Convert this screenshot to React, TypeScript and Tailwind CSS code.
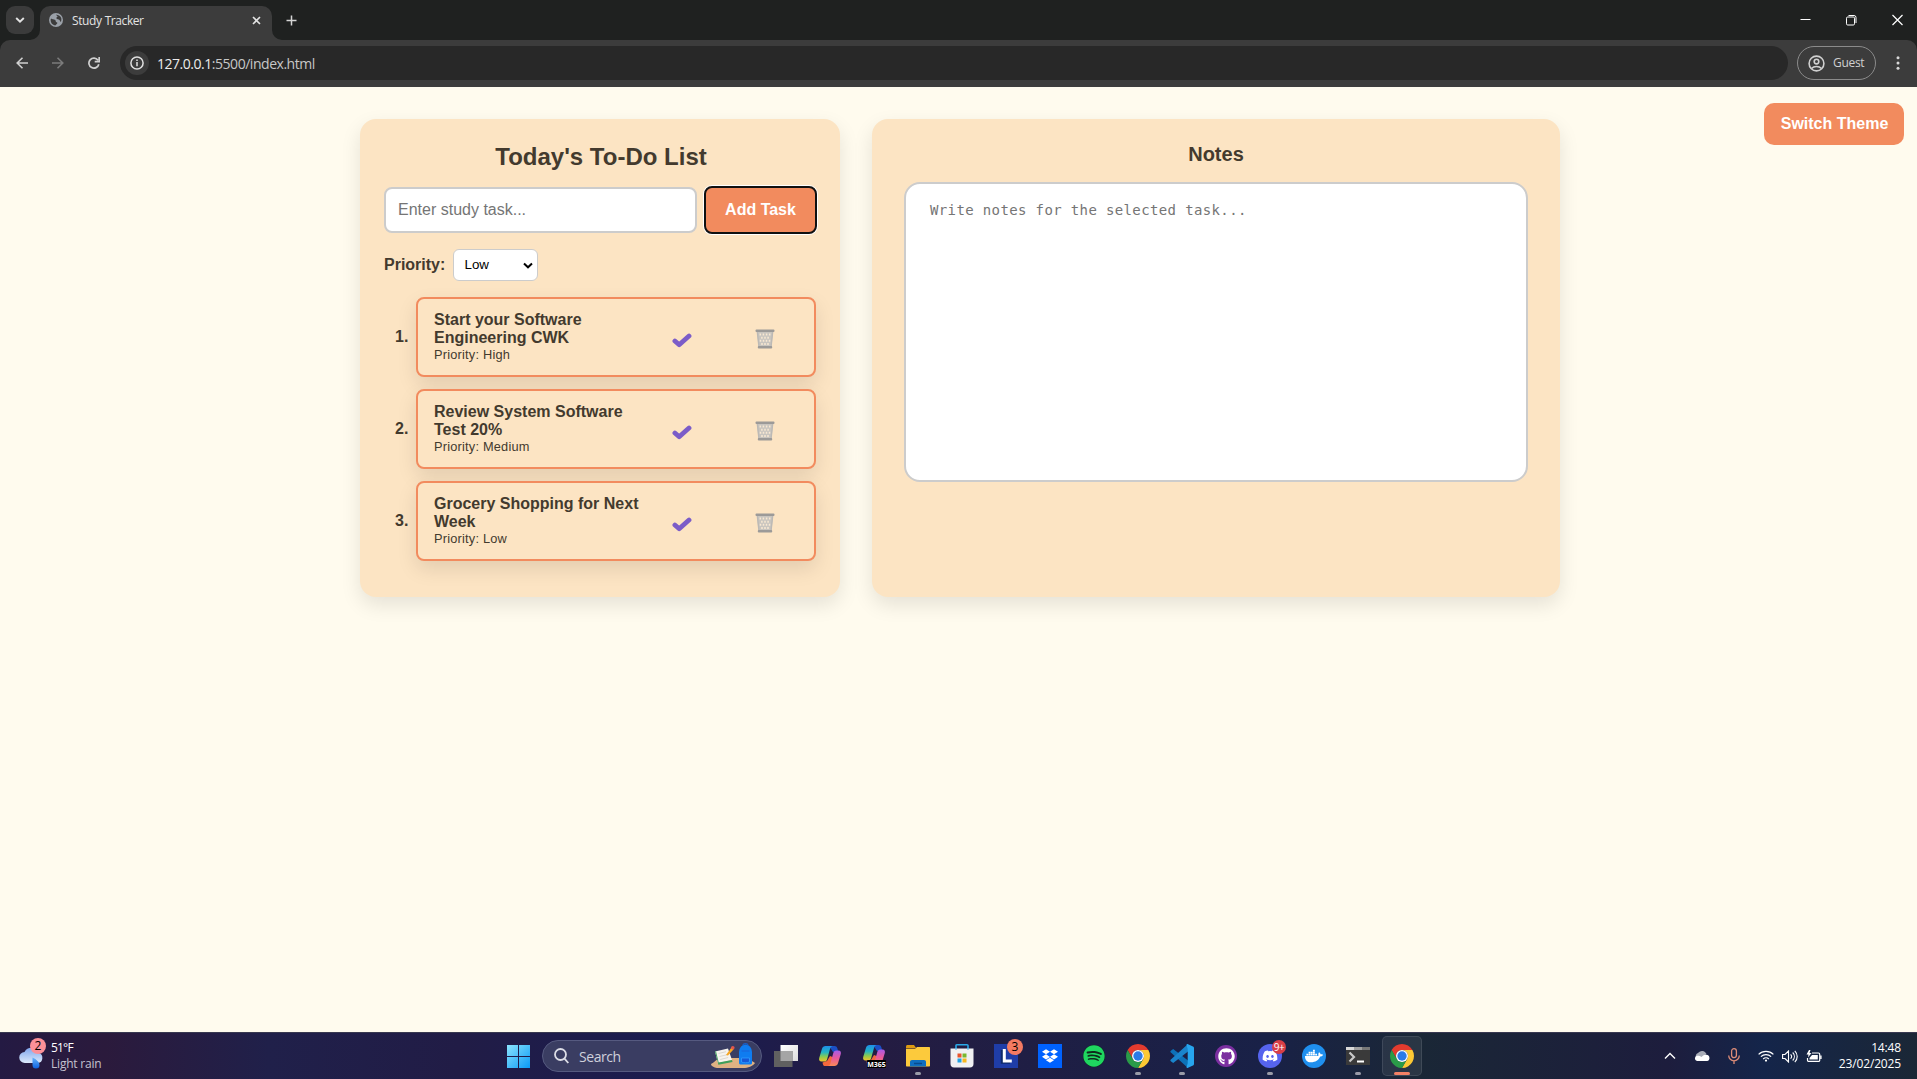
import React from "react";
import { FaDiscord, FaDocker, FaDropbox, FaGithub, FaSpotify } from "react-icons/fa6";

const UI = "font-['Segoe_UI','Open_Sans',sans-serif]";

function ChromeIcon() {
  return (
    <svg width="24" height="24" viewBox="0 0 24 24">
      <path d="M1.61 6A12 12 0 0 1 22.39 6H12A6 6 0 0 0 6.8 15Z" fill="#e33b2e" />
      <path d="M22.39 6A12 12 0 0 1 12 24L17.2 15A6 6 0 0 0 12 6Z" fill="#fcc934" />
      <path d="M12 24A12 12 0 0 1 1.61 6L6.8 15A6 6 0 0 0 17.2 15Z" fill="#2a9b48" />
      <circle cx="12" cy="12" r="6" fill="#fff" />
      <circle cx="12" cy="12" r="4.7" fill="#2a7be8" />
    </svg>
  );
}

function CopilotIcon({ id }: { id: string }) {
  return (
    <svg width="24" height="22" viewBox="0 0 24 22">
      <defs>
        <linearGradient id={id + "a"} x1="0" y1="0" x2="0" y2="1">
          <stop offset="0" stopColor="#1f8fe8" />
          <stop offset=".4" stopColor="#22b4c4" />
          <stop offset=".7" stopColor="#8fcb4c" />
          <stop offset="1" stopColor="#f5c22b" />
        </linearGradient>
        <linearGradient id={id + "b"} x1="0" y1="0" x2="0" y2="1">
          <stop offset="0" stopColor="#a65be8" />
          <stop offset=".5" stopColor="#e8589c" />
          <stop offset="1" stopColor="#fb8a56" />
        </linearGradient>
      </defs>
      <path d="M11 1h5.5c1.6 0 2.3.8 2.8 2.3L20.500 7H15l-2-3z" fill="#1b4fc4" />
      <path d="M6.500 21h6c1.600 0 2.500-.8 3-2.500L17 13l-5-2-3 5-4.500 1.500C5 19.500 5.300 21 6.500 21z" fill="#f4683c" />
      <path d="M7.500 1h7.200c-1.700.3-2.300 1.500-2.700 3L9.200 14c-.5 1.800-1.300 2.600-3 2.600H3.500C1.500 16.600.7 15 1.200 13L4 3.700C4.600 1.900 5.700 1 7.500 1z" fill={`url(#${id}a)`} />
      <path d="M16.500 21H9.800c1.700-.3 2.300-1.500 2.700-3l2.800-10c.5-1.800 1.300-2.600 3-2.600h2.200c2 0 2.800 1.600 2.300 3.600L20 18.300c-.6 1.800-1.700 2.700-3.500 2.700z" fill={`url(#${id}b)`} />
    </svg>
  );
}

function Cell({ children, dot, active }: { children: React.ReactNode; dot?: boolean; active?: boolean }) {
  return (
    <div className="relative flex h-[46px] w-[44px] shrink-0 items-center justify-center">
      {active && <div className="absolute inset-x-[2px] top-[3px] h-[40px] rounded-[5px] border border-white/10 bg-white/[0.07]" />}
      <div className="relative">{children}</div>
      {dot && <div className="absolute bottom-[4px] left-[19px] h-[3px] w-[6px] rounded-full bg-[#9a9ba8]" />}
      {active && <div className="absolute bottom-[4px] left-[14px] h-[3px] w-[16px] rounded-full bg-[#f38166]" />}
    </div>
  );
}

function BrowserChrome() {
  return (
    <header className={"h-[87px] bg-[#1f2120] " + UI}>
      <div className="flex h-[40px] items-start pl-[6px] pt-[6px]">
        <div className="flex h-[28px] w-[28px] items-center justify-center rounded-[9px] bg-[#3b3b3b]">
          <svg width="10" height="8" viewBox="0 0 10 8" fill="none" stroke="#e3e3e3" strokeWidth="1.900"><path d="M1.200 2 5 5.700 8.800 2" /></svg>
        </div>
        <div className="relative ml-[6px] flex h-[34px] w-[232px] items-center rounded-t-[10px] bg-[#3c3c3c] pb-[6px]">
          <svg className="absolute -left-[10px] bottom-0" width="10" height="10"><path d="M10 0V10H0A10 10 0 0 0 10 0" fill="#3c3c3c" /></svg>
          <svg className="absolute -right-[10px] bottom-0" width="10" height="10"><path d="M0 0V10H10A10 10 0 0 1 0 0" fill="#3c3c3c" /></svg>
          <svg className="ml-[9px]" width="14" height="14" viewBox="0 0 14 14">
            <circle cx="7" cy="7" r="7" fill="#9aa0a8" />
            <path d="M2 5.500c1 .8 3 .4 4.200 1.500 1 1 .2 2 1.400 2.300.8.200 1 .9.400 1.500L6.200 12.500C3.500 12 1.600 10 1.600 7zM7 1.700c1.500-.3 4 .7 5 2.800.6 1.500.5 3-.1 4.400C11 8.500 11 7 9.800 6.500 8.500 6.200 7.300 6 7.300 5c0-.8 1.200-.8 1.300-1.700C8.500 2.600 7 2.600 7 1.700z" fill="#3c3c3c" />
          </svg>
          <span className="ml-[9px] mt-[2px] text-[12px] leading-[16px] tracking-[-0.420px] text-[#e3e3e3] [word-spacing:0.5px]">Study Tracker</span>
          <svg className="ml-auto mr-[11px]" width="9" height="9" viewBox="0 0 9 9" stroke="#e3e3e3" strokeWidth="1.600"><path d="M1 1l7 7M8 1l-7 7" /></svg>
        </div>
        <svg className="ml-[14px] mt-[9px]" width="11" height="11" viewBox="0 0 11 11" stroke="#d5d5d5" strokeWidth="1.500"><path d="M5.500.5v10M.5 5.500h10" /></svg>
        <div className="ml-auto flex items-center pr-[14px] pt-[8px] text-white">
          <svg width="11" height="12" viewBox="0 0 11 12" stroke="white"><path d="M.5 5.500h10" /></svg>
          <svg className="ml-[35px]" width="11" height="12" viewBox="0 0 11 12" stroke="white" fill="none"><rect x=".5" y="3" width="8" height="8" rx="1.200" /><path d="M2.500 1.500H8a2 2 0 0 1 2 2V9" /></svg>
          <svg className="ml-[35px]" width="11" height="12" viewBox="0 0 11 12" stroke="white" strokeWidth="1.200"><path d="M.5 1l10 10M10.500 1l-10 10" /></svg>
        </div>
      </div>
      <div className="flex h-[47px] items-center rounded-t-[10px] bg-[#3c3c3c] pb-[1px] pl-[16px]">
        <svg width="12" height="12" viewBox="0 0 12 12" fill="none" stroke="#d0d0d0" strokeWidth="1.600"><path d="M12 6H1.200M6.500.8 1.200 6l5.300 5.200" /></svg>
        <svg className="ml-[24px]" width="12" height="12" viewBox="0 0 12 12" fill="none" stroke="#7b7b7b" strokeWidth="1.600"><path d="M0 6h10.800M5.500.8 10.800 6l-5.300 5.200" /></svg>
        <svg className="ml-[24px]" width="12" height="12" viewBox="0 0 12 12" fill="none" stroke="#d0d0d0" strokeWidth="1.700"><path d="M10.800 7.200A5 5 0 1 1 10 3.200M11.200 0v4.600H6.700" /></svg>
        <div className="ml-[20px] flex h-[34px] w-[1668px] items-center rounded-full bg-[#282828] pl-[5px]">
          <div className="flex h-[24px] w-[24px] items-center justify-center rounded-full bg-[#3c3c3c]">
            <svg width="14" height="14" viewBox="0 0 14 14" fill="none" stroke="#e0e0e0" strokeWidth="1.500"><circle cx="7" cy="7" r="6.100" /><path d="M7 6v4.300M7 3.500v1.500" /></svg>
          </div>
          <span className="ml-[8px] text-[14px] tracking-[-0.470px] text-[#c7c7c7]"><span className="text-[#ececec]">127.0.0.1</span>:5500/index.html</span>
        </div>
        <div className="ml-[9px] flex h-[34px] w-[79px] items-center rounded-full border border-[#8b8b8b] pl-[10px]">
          <svg width="17" height="17" viewBox="0 0 17 17" fill="none" stroke="#d0d0d0" strokeWidth="1.600"><circle cx="8.500" cy="8.500" r="7.400" /><circle cx="8.500" cy="6.600" r="2.300" /><path d="M3.500 13.500c2.500-2.700 7.500-2.700 10 0" /></svg>
          <span className="ml-[8px] text-[12px] tracking-[-0.3px] text-[#d0d0d0]">Guest</span>
        </div>
        <svg className="ml-[20px]" width="4" height="14" viewBox="0 0 4 14" fill="#d8d8d8"><circle cx="2" cy="1.700" r="1.500" /><circle cx="2" cy="7" r="1.500" /><circle cx="2" cy="12.300" r="1.500" /></svg>
      </div>
    </header>
  );
}

function TrashIcon() {
  return (
    <svg width="20" height="20" viewBox="0 0 20 20" fill="none">
      <path d="M1.800 2h16.400l-1.800 16H3.600z" fill="#c9c5bf" />
      <path d="M5.300 4.500v2M8.400 4.500v2M11.600 4.500v2M14.700 4.500v2M6.900 7.700v2M10 7.700v2M13.100 7.700v2M5.500 10.800v2M8.500 10.800v2M11.500 10.800v2M14.500 10.800v2M7 14v2M10 14v2M13 14v2" stroke="#f8e8d2" strokeWidth="1.500" />
      <path d="M2.300 2.500 4 18M17.700 2.500 16 18" stroke="#bcb9b5" strokeWidth="1.400" />
      <rect x=".5" y=".5" width="19" height="2.500" rx="1" fill="#9c9a98" />
      <rect x="2.800" y="17" width="14.400" height="2.500" rx="1" fill="#9c9a98" />
    </svg>
  );
}

const tasks = [
  { lines: ["Start your Software", "Engineering CWK"], priority: "High" },
  { lines: ["Review System Software", "Test 20%"], priority: "Medium" },
  { lines: ["Grocery Shopping for Next", "Week"], priority: "Low" },
];

function TaskRow({ n, lines, priority }: { n: number; lines: string[]; priority: string }) {
  return (
    <li className="flex h-[80px] items-center">
      <span className="w-[32px] pl-[11px] text-[16px] font-bold leading-[18px]">{n}.</span>
      <div className="flex h-[80px] w-[400px] rounded-[8px] border-2 border-[#f28b5e] bg-[#fce4c3] pl-[16px] pt-[12px] shadow-[0_8px_20px_rgba(0,0,0,0.1)]">
        <div className="w-[238px]">
          <div className="whitespace-nowrap text-[16px] font-bold leading-[18px]">
            {lines.map((l) => <div key={l}>{l}</div>)}
          </div>
          <div className="text-[12.800px] leading-[15px] tracking-[0.2px]">Priority: {priority}</div>
        </div>
        <svg className="mt-[22px]" width="20" height="15" viewBox="0 0 20 15" fill="none" stroke="#7b5cc8" strokeWidth="4.800" strokeLinecap="round" strokeLinejoin="round"><path d="M2.900 8 7.200 11.800 17 3" /></svg>
        <div className="ml-[63px] mt-[17.500px]"><TrashIcon /></div>
      </div>
    </li>
  );
}

function StudyTracker() {
  return (
    <main className="relative flex h-[945px] items-start gap-[32px] overflow-hidden bg-[#fffbee] pl-[360px] pt-[32px] font-['Liberation_Sans',Arial,sans-serif] text-[#433a2e]">
      <section className="h-[478px] w-[480px] rounded-[16px] bg-[#fce4c3] px-[24px] pt-[24px] shadow-[0_8px_20px_rgba(0,0,0,0.1)]">
        <h2 className="pl-[2px] text-center text-[24px] font-bold leading-[28px]">Today's To-Do List</h2>
        <div className="-mr-[1px] mt-[15px] flex h-[48px] items-center">
          <div className="flex h-[46px] w-[313px] shrink-0 items-center rounded-[8px] border-2 border-[#cccccc] bg-white pl-[12px] pb-[1px] text-[16px] text-[#757575]">Enter study task...</div>
          <button className="ml-[7px] h-[48px] w-[113px] shrink-0 rounded-[8px] border-2 border-[#101010] bg-[#f28b5e] text-[16px] font-bold text-white shadow-[0_0_0_1px_#fff]">Add Task</button>
        </div>
        <div className="mt-[15px] flex h-[32px] items-center">
          <span className="text-[16px] font-bold">Priority:</span>
          <div className="ml-auto mr-[278px] flex h-[32px] w-[85px] shrink-0 items-center justify-between rounded-[6px] border border-[#cccccc] bg-white pl-[10.500px] pr-[4px] text-[13.333px] text-black">
            <span>Low</span>
            <svg width="10" height="7" viewBox="0 0 10 7" fill="none" stroke="black" strokeWidth="2"><path d="M1 1.500 5 5.300 9 1.500" /></svg>
          </div>
        </div>
        <ol className="mt-[16px] flex flex-col gap-[12px]">
          {tasks.map((t, i) => <TaskRow key={t.priority} n={i + 1} lines={t.lines} priority={t.priority} />)}
        </ol>
      </section>
      <section className="h-[478px] w-[688px] rounded-[16px] bg-[#fce4c3] px-[32px] pt-[24px] shadow-[0_8px_20px_rgba(0,0,0,0.1)]">
        <h3 className="text-center text-[20px] font-bold leading-[23px]">Notes</h3>
        <div className="mt-[16px] h-[300px] rounded-[16px] border-2 border-[#cccccc] bg-white px-[24px] pt-[17px] font-['DejaVu_Sans_Mono',monospace] text-[14px] leading-[19px] tracking-[0.370px] text-[#757575]">Write notes for the selected task...</div>
      </section>
      <button className="absolute right-[13px] top-[16px] h-[42px] w-[140px] rounded-[10px] bg-[#f28b5e] pl-[1px] text-[16px] font-bold text-white">Switch Theme</button>
    </main>
  );
}

function Taskbar() {
  return (
    <footer className={"flex h-[47px] items-center border-t border-[#383850] bg-[linear-gradient(90deg,#241a43_0%,#2b1a3c_5.500%,#20204a_14%,#211c46_24%,#1a1c50_36%,#241c42_46%,#1d1f45_57%,#192147_66%,#1a2736_74%,#1d1d3d_87%,#14254a_92%,#1b2736_100%)] " + UI}>
      <div className="flex w-[496px] items-center pl-[18px]">
        <div className="relative h-[32px] w-[33px]">
          <svg width="28" height="32" viewBox="0 0 28 32">
            <defs>
              <linearGradient id="cloud" x1="0" y1="0" x2="0" y2="1"><stop offset="0" stopColor="#7fa6ec" /><stop offset="1" stopColor="#dce9fb" /></linearGradient>
              <linearGradient id="drop" x1="0" y1="0" x2="0" y2="1"><stop offset="0" stopColor="#65b3fb" /><stop offset="1" stopColor="#0d62e0" /></linearGradient>
            </defs>
            <path d="M7 23a5.500 5.500 0 0 1-.5-11A8 8 0 0 1 21 13a5.200 5.200 0 0 1-1 10z" fill="url(#cloud)" />
            <path d="M14.500 17.500c4 2 7 4.500 7 7.500a3.500 3.500 0 0 1-7 0z" fill="url(#drop)" />
          </svg>
          <div className="absolute left-[12px] top-[-2px] flex h-[16px] w-[16px] items-center justify-center rounded-full bg-[#fb9098] text-[12px] leading-none text-black">2</div>
        </div>
        <div className="text-[12px] leading-[16px] tracking-[-0.2px]">
          <div className="tracking-[-0.8px] text-white">51°F</div>
          <div className="text-[#c4c2cf]">Light rain</div>
        </div>
      </div>
      <Cell>
        <svg width="23" height="23" viewBox="0 0 23 23">
          <defs><linearGradient id="win" x1="0" y1="0" x2="1" y2="1"><stop offset="0" stopColor="#8be3fd" /><stop offset="1" stopColor="#0a9af5" /></linearGradient></defs>
          <path d="M0 0h11v11H0zM12 0h11v11H12zM0 12h11v11H0zM12 12h11v11H12z" fill="url(#win)" />
        </svg>
      </Cell>
      <div className="ml-[2px] mr-[2px] flex h-[32px] w-[220px] items-center rounded-full border border-[#565a80] bg-[#3a3d62] pl-[10.500px] pr-[5px]">
        <svg width="15" height="16" viewBox="0 0 15 16" fill="none" stroke="#dcdde6" strokeWidth="1.800"><circle cx="6.500" cy="6.500" r="5.500" /><path d="M10.500 10.700 14.300 15" /></svg>
        <span className="ml-[10.500px] text-[14px] tracking-[-0.450px] text-[#cfd0dc]">Search</span>
        <svg className="ml-auto" width="46" height="26" viewBox="0 0 46 26">
          <path d="M1 21c3-1 5-4.500 8-6h25c5 1 8 3 11 5-1 2-5 4.500-10 5H7c-3-.5-6-2-6-4z" fill="#dfb283" />
          <path d="M5 8.500 18 5.500 22 17 8 20z" fill="#f7f4ee" />
          <path d="M5 8.500 8 20l.3 1.800L22.500 19 22 17 8.700 19.600 6 8.200z" fill="#3f9f5b" />
          <path d="M8.500 10.500 16 8.700M9.500 13.500l8.500-2M10.200 16.500l8-2" stroke="#d3cfc8" strokeWidth=".8" />
          <path d="M16 12 21.500 4.500l2.200 1.700L18 12.500z" fill="#f6a623" /><circle cx="22.800" cy="4.800" r="1.800" fill="#e2574c" />
          <path d="M29 9a6.500 7.500 0 0 1 13 0v11c0 1-1 1.500-2 1.500h-9c-1 0-2-.5-2-1.500z" fill="#0f7cf0" />
          <path d="M33 2.500c0-2.500 5-2.500 5 0" stroke="#1a5ec8" fill="none" strokeWidth="1.300" />
          <path d="M31.500 15h8v4c-2 1-6 1-8 0z" stroke="#2f9dff" strokeWidth=".8" fill="#1558d8" /><path d="M31.500 8h8" stroke="#1a63d8" />
        </svg>
      </div>
      <Cell>
        <svg width="24" height="22" viewBox="0 0 24 22">
          <defs><linearGradient id="tv" x1="0" y1="0" x2="1" y2="1"><stop offset="0" stopColor="#fff" /><stop offset="1" stopColor="#dcdcdc" /></linearGradient></defs>
          <path d="M6.500 0H24v16H6.500z" fill="url(#tv)" /><path d="M0 6h18.500v16H0z" fill="#606060" /><path d="M6.500 6h12v10h-12z" fill="#a5a5a5" />
        </svg>
      </Cell>
      <Cell><CopilotIcon id="cp" /></Cell>
      <Cell>
        <div className="relative h-[24px] w-[24px]">
          <CopilotIcon id="cm" />
          <div className="absolute left-[5px] top-[16px] flex h-[8px] w-[19px] items-center justify-center rounded-[1px] bg-black text-[7px] font-bold leading-none text-white">M365</div>
        </div>
      </Cell>
      <Cell dot>
        <svg width="24" height="22" viewBox="0 0 24 22">
          <path d="M0 1.500C0 .6.600 0 1.500 0H8l2.500 3.500H0z" fill="#dd9a12" />
          <path d="M0 4h9l2-2h12c.6 0 1 .4 1 1v17.500c0 .6-.4 1-1 1H1c-.6 0-1-.4-1-1z" fill="#fcca3c" />
          <path d="M4 21.500V17c0-1.200.8-2 2-2h12c1.200 0 2 .8 2 2v4.500z" fill="#0f6fc0" /><path d="M8 18.500h8" stroke="#084a8c" strokeWidth="1.500" />
        </svg>
      </Cell>
      <Cell>
        <svg width="24" height="24" viewBox="0 0 24 24">
          <path d="M6 6V1.500C6 .9 6.400.8 7 .8h10c.6 0 1 .1 1 .7V6" fill="none" stroke="#2aa9e8" strokeWidth="1.600" />
          <path d="M.5 4.500h23V20c0 2-1.300 3.500-3.500 3.500H4C1.800 23.500.5 22 .5 20z" fill="#f0f0f2" />
          <path d="M6 4.500v1M18 4.500v1" stroke="#2aa9e8" strokeWidth="1.600" />
          <path d="M7.500 9.500h4v4h-4z" fill="#e8542c" /><path d="M12.500 9.500h4v4h-4z" fill="#7ab82e" /><path d="M7.500 14.500h4v4h-4z" fill="#21a3e4" /><path d="M12.500 14.500h4v4h-4z" fill="#f7b71d" />
        </svg>
      </Cell>
      <Cell>
        <div className="relative h-[24px] w-[24px] bg-[#1f3da8]">
          <svg width="24" height="24" viewBox="0 0 24 24"><path d="M8 6v12.500h8" fill="none" stroke="#0e2a6b" strokeWidth="2.500" /><path d="M10.300 5v12h7.500" fill="none" stroke="#fff" strokeWidth="3" /></svg>
          <div className="absolute left-[13px] top-[-5px] flex h-[16px] w-[16px] items-center justify-center rounded-full bg-[#f37a62] text-[12px] leading-none text-black">3</div>
        </div>
      </Cell>
      <Cell><div className="flex h-[24px] w-[24px] items-center justify-center bg-[#0062ff] text-white"><FaDropbox size={16} /></div></Cell>
      <Cell><div className="flex h-[22px] w-[22px] items-center justify-center rounded-full bg-[#0f2a1c] text-[#1fd660]"><FaSpotify size={22} className="shrink-0" /></div></Cell>
      <Cell dot><ChromeIcon /></Cell>
      <Cell dot>
        <svg width="24" height="24" viewBox="0 0 24 24">
          <path d="M1.500 6.200 3.200 5 18 16.500V24L.6 8.300C0 7.700.500 6.900 1.500 6.200z" fill="#0d71b8" />
          <path d="M1.500 17.800 3.200 19 18 7.500V0L.6 15.700c-.6.600-.1 1.400.9 2.100z" fill="#1a84cc" />
          <path d="M17.500 0 23 2.500c.6.300 1 .8 1 1.500v16c0 .7-.4 1.200-1 1.500L17.500 24c-.5 0-1-.3-1-.8l1.200-4V5L16.500.8c0-.5.500-.8 1-.8z" fill="#27a5ee" />
        </svg>
      </Cell>
      <Cell><div className="flex h-[22px] w-[22px] items-center justify-center rounded-full bg-[#7b2fa0] text-white"><FaGithub size={17} /></div></Cell>
      <Cell dot>
        <div className="relative flex h-[24px] w-[24px] items-center justify-center rounded-full bg-[#5664ee] text-white">
          <FaDiscord size={16} />
          <div className="absolute left-[14px] top-[-4px] flex h-[14px] w-[14px] items-center justify-center rounded-full bg-[#d83e46] text-[10px] leading-none tracking-[-0.500px] text-white">9+</div>
        </div>
      </Cell>
      <Cell><div className="flex h-[24px] w-[24px] items-center justify-center rounded-full bg-[#1f8fee] text-white"><FaDocker size={18} /></div></Cell>
      <Cell dot>
        <svg width="24" height="18" viewBox="0 0 24 18"><path d="M0 0h24v18H0z" fill="#3a3a3a" /><path d="M0 0h8v3H0z" fill="#d8d8d8" /><path d="M8 0h8v3H8z" fill="#a0a0a0" /><path d="M16 0h8v3h-8z" fill="#777" /><path d="M3.500 5.500 8 10l-4.500 4.500" fill="none" stroke="#c8c8c8" strokeWidth="2.200" /><path d="M11 14.500h7" stroke="#fff" strokeWidth="2" /></svg>
      </Cell>
      <Cell active><ChromeIcon /></Cell>
      <div className="ml-auto flex items-center pr-[16px]">
        <svg width="12" height="8" viewBox="0 0 12 8" fill="none" stroke="white" strokeWidth="1.400"><path d="M1 6.500 6 1.500l5 5" /></svg>
        <svg className="ml-[18px]" width="16" height="12" viewBox="0 0 16 12"><path d="M2.500 8a3.200 3.200 0 0 1 1.500-5A5 5 0 0 1 12.500 4L6 9z" fill="#a9adb8" /><path d="M3 11a2.700 2.700 0 0 1 .2-5.300c2 0 3.300.3 4.300 1.300C8.500 5.500 10 4.500 12 4.700a3.200 3.200 0 0 1 1 6.300z" fill="#fff" /></svg>
        <svg className="ml-[18px]" width="12" height="16" viewBox="0 0 12 16" fill="none" stroke="#dd8c78" strokeWidth="1.300"><rect x="3.600" y=".7" width="4.800" height="9" rx="2.400" /><path d="M.7 7.500a5.300 5.300 0 0 0 10.600 0M6 12.800V16" /></svg>
        <svg className="ml-[18px]" width="16" height="12" viewBox="0 0 16 12" fill="none" stroke="white" strokeWidth="1.200"><path d="M.6 4.400a10.500 10.500 0 0 1 14.800 0M2.900 6.700a7.200 7.200 0 0 1 10.200 0M5.200 9a4 4 0 0 1 5.600 0" /><circle cx="8" cy="10.600" r="1.100" fill="white" stroke="none" /></svg>
        <svg className="ml-[8px]" width="16" height="13" viewBox="0 0 16 13" fill="none" stroke="white" strokeWidth="1.100"><path d="M.6 4.500H3L6.500 1v11L3 8.500H.6zM8.600 4.300c1.200 1.300 1.200 3.100 0 4.400M10.700 2.500c2.200 2.300 2.200 5.700 0 8M12.800.8c3.200 3.300 3.200 8.100 0 11.400" /></svg>
        <svg className="ml-[8px]" width="16" height="13" viewBox="0 0 16 13" fill="none" stroke="white" strokeWidth="1.200"><path d="M6 3h6.500a1.200 1.200 0 0 1 1.200 1.200v6a1.200 1.200 0 0 1-1.200 1.200H2.700a1.200 1.200 0 0 1-1.200-1.200V8M15 5.500v3.500" /><path d="M6 5h5.800v4.500H3.500V8z" fill="white" stroke="none" /><path d="M3 0 .5 4.500h2L2 7.500 5.500 3h-2L4.500 0z" fill="white" stroke="none" /></svg>
        <div className="w-[79px] text-right text-[12px] leading-[16px] tracking-[-0.150px] text-white">
          <div>14:48</div>
          <div>23/02/2025</div>
        </div>
      </div>
    </footer>
  );
}

export default function App() {
  return (
    <div className="flex h-[1079px] w-[1917px] flex-col overflow-hidden">
      <BrowserChrome />
      <StudyTracker />
      <Taskbar />
    </div>
  );
}
